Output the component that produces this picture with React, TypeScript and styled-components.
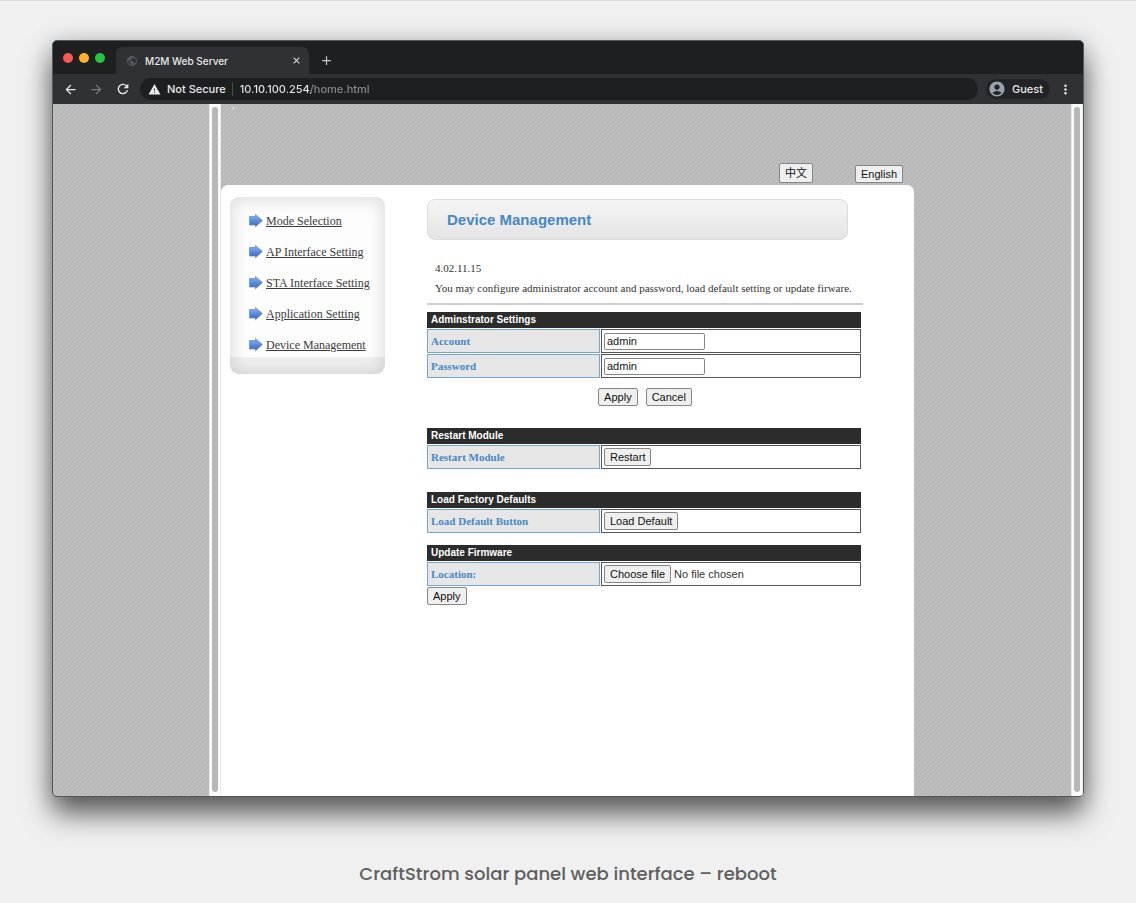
import React from "react";
import styled, { createGlobalStyle } from "styled-components";
import {
  MdAccountCircle,
  MdAdd,
  MdArrowBack,
  MdArrowForward,
  MdClose,
  MdMoreVert,
  MdPublic,
  MdRefresh,
  MdWarning,
} from "react-icons/md";

const ui = `Inter, "Liberation Sans", sans-serif`;
const arial = `"Liberation Sans", "Noto Sans CJK SC", sans-serif`;
const georgia = `Georgia, "Liberation Serif", serif`;

const GlobalStyle = createGlobalStyle`
  *, *::before, *::after { box-sizing: border-box; }
  body { margin: 0; background: #f0f0f0; }
  button, input { font: inherit; color: inherit; }
`;

const Figure = styled.figure`
  display: flex;
  flex-direction: column;
  min-height: 100vh;
  margin: 0;
  padding: 39px 52px 0;
  border-top: 1px solid #dcdcdc;
`;

const Caption = styled.figcaption`
  padding: 64px 0 16px;
  color: #5f5f5f;
  font: 500 18px/26px Poppins, ${ui};
  text-align: center;
`;

/* Browser window */

const Window = styled.div`
  flex: 1;
  display: flex;
  flex-direction: column;
  overflow: hidden;
  border: 1px solid #55575a;
  border-radius: 5px;
  background: #1e1f21;
  box-shadow: 0 17px 28px rgba(0, 0, 0, 0.6), 0 0 24px rgba(0, 0, 0, 0.15);
`;

const TabStrip = styled.header`
  display: flex;
  align-items: flex-end;
  height: 33px;
  padding-left: 10px;
`;

const Lights = styled.div`
  display: flex;
  gap: 6px;
  padding-bottom: 11px;
  margin-right: 11px;
`;

const Light = styled.span<{ $color: string }>`
  width: 10px;
  height: 10px;
  border-radius: 50%;
  background: ${(p) => p.$color};
`;

const Tab = styled.div`
  display: flex;
  align-items: center;
  gap: 7px;
  width: 193px;
  height: 27px;
  padding: 0 7px 0 10px;
  border-radius: 6px 6px 0 0;
  background: #303135;
  color: #e8e9ea;
  font: 500 10px/14px ${ui};

  > svg {
    color: #58595d;
  }
`;

const TabTitle = styled.span`
  flex: 1;
`;

const IconButton = styled.button<{ $dim?: boolean }>`
  display: flex;
  align-items: center;
  justify-content: center;
  padding: 0;
  border: 0;
  background: none;
  color: ${(p) => (p.$dim ? "#797a7d" : "#e8e9ea")};
`;

const NewTab = styled(IconButton)`
  height: 27px;
  margin-left: 10px;
  color: #c4c5c7;
`;

const Toolbar = styled.div`
  display: flex;
  align-items: center;
  height: 30px;
  padding: 0 10px;
  background: #303135;
  color: #e8e9ea;
  font: 500 11px/16px ${ui};
`;

const NavButtons = styled.nav`
  display: flex;
  gap: 11px;
  margin-right: 9px;
`;

const AddressBar = styled.label`
  flex: 1;
  display: flex;
  align-items: center;
  height: 22px;
  padding: 0 8px;
  border-radius: 11px;
  background: #1e1f21;
`;

const Security = styled.span`
  margin-left: 6px;
  padding-right: 6px;
  border-right: 1px solid #4a4b4e;
  line-height: 14px;
`;

const Address = styled.input`
  flex: 1;
  min-width: 0;
  padding: 0 0 0 7px;
  border: 0;
  outline: 0;
  background: linear-gradient(90deg, #e8e9ea 78px, #8b8c8f 78px);
  background-clip: text;
  -webkit-text-fill-color: transparent;
`;

const Profile = styled.button`
  display: flex;
  align-items: center;
  gap: 6px;
  height: 20px;
  margin: 0 8px;
  padding: 0 7px 0 2px;
  border: 0;
  border-radius: 10px;
  background: #222326;
  font-size: 11px;

  svg {
    color: #9aa3ab;
  }
`;

/* Page shown in the window */

const Viewport = styled.div`
  flex: 1;
  display: flex;
  background: linear-gradient(
      135deg,
      #bfbfbf 20%,
      #b8b8b8 20% 50%,
      #bfbfbf 50% 70%,
      #b8b8b8 70%
    )
    0 0 / 5px 5px;
`;

const Gutter = styled.div`
  flex: 0 1 156px;
`;

const ScrollTrack = styled.div`
  display: flex;
  justify-content: center;
  width: 12px;
  padding: 3px 0 4px;
  border: solid #e9e9e9;
  border-width: 0 1px;
  background: #fafafa;
`;

const ScrollThumb = styled.div`
  width: 6px;
  border-radius: 3px;
  background: #b7b7b7;
`;

const Page = styled.div`
  flex: 1;
  display: flex;
  flex-direction: column;
  align-items: flex-start;
`;

const LanguageBar = styled.div`
  display: flex;
  align-items: flex-end;
  justify-content: flex-end;
  gap: 42px;
  width: 100%;
  max-width: 693px;
  height: 81px;
  padding: 0 11px 2px;
`;

const Stray = styled.span`
  align-self: flex-start;
  margin-right: auto;
  color: #fff;
  font: 10px/1px ${georgia};
`;

const Button = styled.button`
  padding: 1px 5px;
  border: 1px solid #858585;
  border-radius: 2px;
  background: #efefef;
  color: #111;
  font: 11px/14px ${arial};
`;

const LanguageButton = styled(Button)<{ $tall?: boolean }>`
  padding-block: ${(p) => (p.$tall ? 2 : 1)}px;
`;

const Sheet = styled.div`
  flex: 1;
  display: flex;
  align-items: flex-start;
  gap: 42px;
  width: 100%;
  max-width: 693px;
  padding: 12px 9px;
  border-radius: 7px 7px 0 0;
  background: #fff;
`;

const Sidebar = styled.nav`
  width: 155px;
  border-radius: 9px;
  background: #fdfdfd;
  box-shadow: inset 0 0 16px 3px #dedede;
  overflow: hidden;
`;

const Menu = styled.ul`
  display: flex;
  flex-direction: column;
  gap: 15px;
  margin: 0;
  padding: 16px 0 4px 19px;
  list-style: none;
`;

const MenuItem = styled.li`
  display: flex;
  align-items: center;
  gap: 3px;
  height: 16px;
`;

const MenuLink = styled.a`
  color: #3c3c3c;
  font: 12px/16px ${georgia};
  text-decoration: underline;
  white-space: nowrap;
`;

const SidebarFoot = styled.div`
  height: 17px;
  background: rgba(0, 0, 0, 0.05);
`;

const Content = styled.main`
  width: 436px;
  padding-top: 2px;
`;

const TitleBar = styled.div`
  max-width: 421px;
  padding: 9px 19px;
  border: 1px solid #dcdcdc;
  border-radius: 8px;
  background: linear-gradient(#f5f5f5, #e5e4e5);
`;

const Title = styled.h1`
  margin: 0;
  color: #4788c2;
  font: bold 15px/21px ${arial};
`;

const Intro = styled.div`
  padding: 20px 8px 3px;
  border-bottom: 2px solid #cdcdcd;
  color: #333;
  font: 11px/16px ${georgia};

  p {
    margin: 0 0 4px;
    white-space: nowrap;
  }
`;

const Section = styled.section<{ $before: number }>`
  margin-top: ${(p) => p.$before}px;
`;

const Table = styled.table`
  width: 436px;
  margin: 0 -1px;
  border-spacing: 1px;
  table-layout: fixed;
`;

const LabelColumn = styled.col`
  width: 173px;
`;

const HeadCell = styled.th`
  height: 16px;
  padding: 0 4px;
  background: #2c2c2c;
  color: #fff;
  font: bold 10px/16px ${arial};
  text-align: left;
`;

const LabelCell = styled.th`
  height: 24px;
  padding: 0 3px;
  border: 1px solid #72a7d5;
  background: #e6e6e6;
  color: #4788c2;
  font: bold 11px/16px ${georgia};
  text-align: left;
`;

const ValueCell = styled.td`
  height: 24px;
  padding: 0 2px;
  border: 1px solid #555;
  background: #fff;
  color: #333;
  font: 11px/15px ${arial};
`;

const TextField = styled.input`
  display: block;
  width: 101px;
  height: 17px;
  padding: 0 2px;
  border: 1px solid #858585;
  border-radius: 2px;
  background: #fff;
  color: #111;
  font: 11px/15px ${arial};
`;

const FilePicker = styled.div`
  display: flex;
  align-items: center;
  gap: 3px;
`;

const FileInput = styled.input`
  position: absolute;
  width: 1px;
  height: 1px;
  opacity: 0;
`;

const Actions = styled.div<{ $centered?: boolean }>`
  display: flex;
  justify-content: ${(p) => (p.$centered ? "center" : "flex-start")};
  gap: 8px;
  padding-top: ${(p) => (p.$centered ? 9 : 0)}px;
`;

const Arrow = () => (
  <svg width="14" height="14" viewBox="0 0 14 14" aria-hidden="true">
    <defs>
      <linearGradient id="arrowFill" x1="0" y1="0" x2="0" y2="1">
        <stop offset="0" stopColor="#8fb6ee" />
        <stop offset="0.5" stopColor="#5a8ddc" />
        <stop offset="1" stopColor="#3566b4" />
      </linearGradient>
    </defs>
    <path
      d="M.5 2.500H6.500V.500L13.400 6.500 6.500 12.800V11H.5Z"
      fill="url(#arrowFill)"
      stroke="#5c88cc"
      strokeWidth="0.7"
    />
  </svg>
);

const menu = [
  "Mode Selection",
  "AP Interface Setting",
  "STA Interface Setting",
  "Application Setting",
  "Device Management",
];

type SettingsProps = {
  heading: string;
  before: number;
  rows: { label: string; id: string; control: React.ReactNode }[];
  children?: React.ReactNode;
};

const Settings = ({ heading, before, rows, children }: SettingsProps) => (
  <Section $before={before}>
    <Table>
      <colgroup>
        <LabelColumn />
        <col />
      </colgroup>
      <thead>
        <tr>
          <HeadCell colSpan={2}>{heading}</HeadCell>
        </tr>
      </thead>
      <tbody>
        {rows.map((row) => (
          <tr key={row.id}>
            <LabelCell scope="row">
              <label htmlFor={row.id}>{row.label}</label>
            </LabelCell>
            <ValueCell>{row.control}</ValueCell>
          </tr>
        ))}
      </tbody>
    </Table>
    {children}
  </Section>
);

export default function App() {
  return (
    <>
      <GlobalStyle />
      <Figure>
        <Window>
          <TabStrip>
            <Lights>
              <Light $color="#fc5753" />
              <Light $color="#fdb32f" />
              <Light $color="#28c440" />
            </Lights>
            <Tab>
              <MdPublic size={12} />
              <TabTitle>M2M Web Server</TabTitle>
              <IconButton aria-label="Close tab">
                <MdClose size={11} />
              </IconButton>
            </Tab>
            <NewTab aria-label="New tab">
              <MdAdd size={15} />
            </NewTab>
          </TabStrip>
          <Toolbar>
            <NavButtons>
              <IconButton aria-label="Back">
                <MdArrowBack size={15} />
              </IconButton>
              <IconButton aria-label="Forward" $dim>
                <MdArrowForward size={15} />
              </IconButton>
              <IconButton aria-label="Reload">
                <MdRefresh size={16} />
              </IconButton>
            </NavButtons>
            <AddressBar>
              <MdWarning size={13} />
              <Security>Not Secure</Security>
              <Address
                type="text"
                aria-label="Address"
                defaultValue="10.10.100.254/home.html"
              />
            </AddressBar>
            <Profile>
              <MdAccountCircle size={18} />
              Guest
            </Profile>
            <IconButton aria-label="More">
              <MdMoreVert size={15} />
            </IconButton>
          </Toolbar>
          <Viewport>
            <Gutter />
            <ScrollTrack>
              <ScrollThumb />
            </ScrollTrack>
            <Page>
              <LanguageBar>
                <Stray>,</Stray>
                <LanguageButton $tall>中文</LanguageButton>
                <LanguageButton>English</LanguageButton>
              </LanguageBar>
              <Sheet>
                <Sidebar>
                  <Menu>
                    {menu.map((item) => (
                      <MenuItem key={item}>
                        <Arrow />
                        <MenuLink href="#">{item}</MenuLink>
                      </MenuItem>
                    ))}
                  </Menu>
                  <SidebarFoot />
                </Sidebar>
                <Content>
                  <TitleBar>
                    <Title>Device Management</Title>
                  </TitleBar>
                  <Intro>
                    <p>4.02.11.15</p>
                    <p>
                      You may configure administrator account and password,
                      load default setting or update firware.
                    </p>
                  </Intro>
                  <Settings
                    heading="Adminstrator Settings"
                    before={6}
                    rows={[
                      {
                        label: "Account",
                        id: "account",
                        control: (
                          <TextField id="account" type="text" defaultValue="admin" />
                        ),
                      },
                      {
                        label: "Password",
                        id: "password",
                        control: (
                          <TextField id="password" type="text" defaultValue="admin" />
                        ),
                      },
                    ]}
                  >
                    <Actions $centered>
                      <Button>Apply</Button>
                      <Button>Cancel</Button>
                    </Actions>
                  </Settings>
                  <Settings
                    heading="Restart Module"
                    before={21}
                    rows={[
                      {
                        label: "Restart Module",
                        id: "restart",
                        control: <Button id="restart">Restart</Button>,
                      },
                    ]}
                  />
                  <Settings
                    heading="Load Factory Defaults"
                    before={21}
                    rows={[
                      {
                        label: "Load Default Button",
                        id: "defaults",
                        control: <Button id="defaults">Load Default</Button>,
                      },
                    ]}
                  />
                  <Settings
                    heading="Update Firmware"
                    before={10}
                    rows={[
                      {
                        label: "Location:",
                        id: "firmware",
                        control: (
                          <FilePicker>
                            <FileInput id="firmware" type="file" />
                            <Button as="label" htmlFor="firmware">
                              Choose file
                            </Button>
                            <span>No file chosen</span>
                          </FilePicker>
                        ),
                      },
                    ]}
                  >
                    <Actions>
                      <Button>Apply</Button>
                    </Actions>
                  </Settings>
                </Content>
              </Sheet>
            </Page>
            <ScrollTrack>
              <ScrollThumb />
            </ScrollTrack>
          </Viewport>
        </Window>
        <Caption>CraftStrom solar panel web interface – reboot</Caption>
      </Figure>
    </>
  );
}
